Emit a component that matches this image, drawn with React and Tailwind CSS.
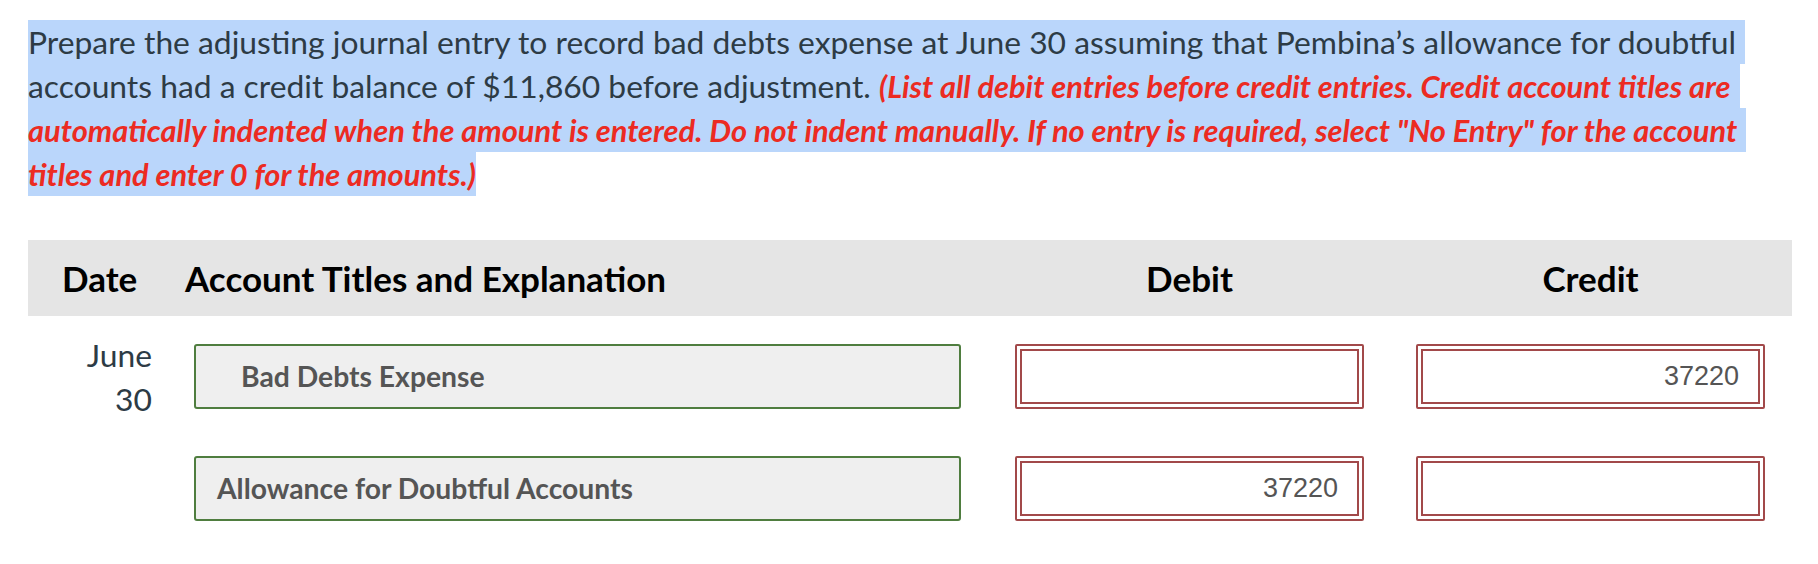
const LATO = { fontFamily: "Lato, 'Open Sans', 'Liberation Sans', sans-serif" };

function Line({ children, pr = "pr-[9px]" }) {
    return (
        <div className={`w-fit h-[44px] leading-[44px] bg-[#bad6fb] whitespace-nowrap ${pr}`}>
            {children}
        </div>
    );
}

function Red({ children }) {
    return <span className="font-bold italic text-[30.8px] text-[#ec2b22]">{children}</span>;
}

function AmountBox({ value }) {
    return (
        <div className="w-[349px] h-[65px] border-2 border-[#a2494a] rounded-[2px] p-[3px] bg-white">
            <div className="h-full border-2 border-[#a2494a] flex items-center justify-end pr-[19px] font-['Liberation_Sans',Arial,sans-serif] text-[27px] text-[#555555]">
                {value}
            </div>
        </div>
    );
}

function AccountBox({ title, indent }) {
    return (
        <div
            className={[
                "w-[767px] h-[65px] border-2 border-[#4f7d3f] rounded-[3px] bg-[#efefef]",
                "flex items-center text-[28.3px] font-bold text-[#555555]",
                indent ? "pl-[45px]" : "pl-[21px]",
            ].join(" ")}
        >
            {title}
        </div>
    );
}

export default function App() {
    return (
        <div className="w-[1818px] h-[564px] bg-white px-[28px] pt-[20px]" style={LATO}>
            {/* === QUESTION TEXT === */}
            <div className="text-[31.8px] text-[#2d3b45]">
                <Line>
                    Prepare the adjusting journal entry to record bad debts expense at June 30 assuming that Pembina’s allowance for doubtful
                </Line>
                <Line>
                    accounts had a credit balance of $11,860 before adjustment.{" "}
                    <Red>(List all debit entries before credit entries. Credit account titles are</Red>
                </Line>
                <Line>
                    <Red>
                        automatically indented when the amount is entered. Do not indent manually. If no entry is required, select "No Entry" for the account
                    </Red>
                </Line>
                <Line pr="pr-0">
                    <Red>titles and enter 0 for the amounts.)</Red>
                </Line>
            </div>

            {/* === JOURNAL TABLE === */}
            <div className="mt-[44px] w-[1764px]">
                <div className="h-[76px] bg-[#e5e5e5] flex items-center text-[35px] font-bold text-black">
                    <div className="w-[157px] pl-[34px]">Date</div>
                    <div className="w-[830px]">Account Titles and Explanation</div>
                    <div className="w-[349px] text-center">Debit</div>
                    <div className="w-[52px]" />
                    <div className="w-[349px] text-center">Credit</div>
                </div>

                <div className="mt-[28px] flex items-start">
                    <div className="w-[166px] -mt-[11px] pr-[42px] text-right text-[31.8px] leading-[44px] text-[#2d3b45]">
                        <div>June</div>
                        <div>30</div>
                    </div>
                    <AccountBox title="Bad Debts Expense" indent />
                    <div className="ml-[54px]">
                        <AmountBox value="" />
                    </div>
                    <div className="ml-[52px]">
                        <AmountBox value="37220" />
                    </div>
                </div>

                <div className="mt-[35px] flex items-start">
                    <div className="w-[166px]" />
                    <AccountBox title="Allowance for Doubtful Accounts" />
                    <div className="ml-[54px]">
                        <AmountBox value="37220" />
                    </div>
                    <div className="ml-[52px]">
                        <AmountBox value="" />
                    </div>
                </div>
            </div>
        </div>
    );
}
